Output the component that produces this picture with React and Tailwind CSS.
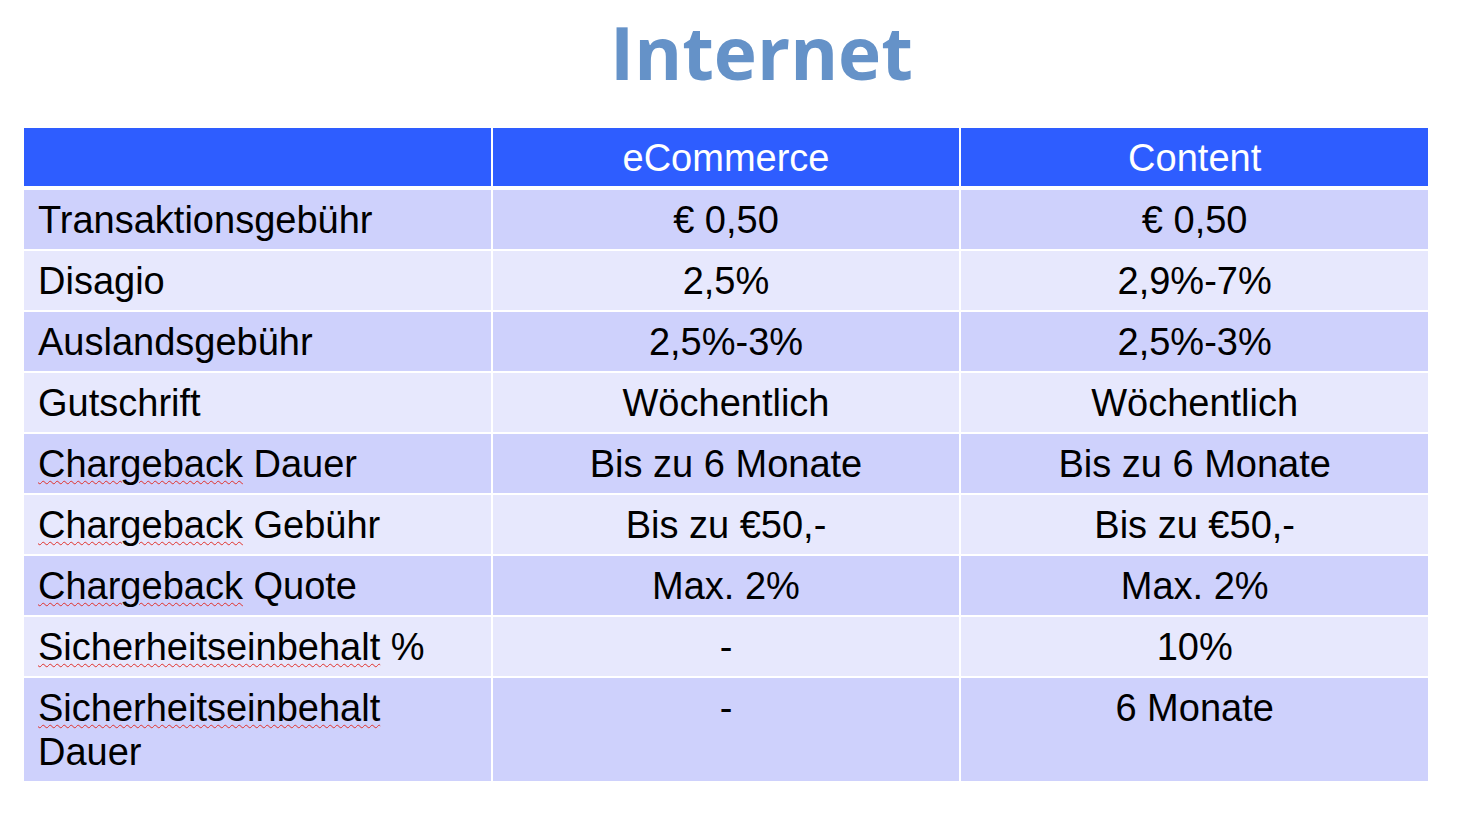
import React from "react";

const rows = [
  { label: "Transaktionsgebühr", a: "€ 0,50", b: "€ 0,50" },
  { label: "Disagio", a: "2,5%", b: "2,9%-7%" },
  { label: "Auslandsgebühr", a: "2,5%-3%", b: "2,5%-3%" },
  { label: "Gutschrift", a: "Wöchentlich", b: "Wöchentlich" },
  { label: [["Chargeback", true], [" Dauer", false]], a: "Bis zu 6 Monate", b: "Bis zu 6 Monate" },
  { label: [["Chargeback", true], [" Gebühr", false]], a: "Bis zu €50,-", b: "Bis zu €50,-" },
  { label: [["Chargeback", true], [" Quote", false]], a: "Max. 2%", b: "Max. 2%" },
  { label: [["Sicherheitseinbehalt", true], [" %", false]], a: "-", b: "10%" },
  { label: [["Sicherheitseinbehalt", true], ["\nDauer", false]], a: "-", b: "6 Monate", tall: true },
];

function Label({ label }) {
  if (typeof label === "string") return <span>{label}</span>;
  return (
    <>
      {label.map(([t, wavy], i) =>
        wavy ? (
          <span
            key={i}
            className="underline decoration-wavy decoration-[#e0302a] decoration-[1px] underline-offset-[3px]"
          >
            {t}
          </span>
        ) : t.startsWith("\n") ? (
          <React.Fragment key={i}>
            <br />
            {t.slice(1)}
          </React.Fragment>
        ) : (
          <span key={i}>{t}</span>
        )
      )}
    </>
  );
}

export default function App() {
  return (
    <div className="w-[1463px] h-[816px] bg-white overflow-hidden">
      <div className="flex justify-center pl-[60px] pt-[2px]">
        <h1
          className="text-[73px] leading-[100px] font-bold text-[#6592c8]"
          style={{ fontFamily: '"Open Sans", sans-serif' }}
        >
          Internet
        </h1>
      </div>
      <div
        className="ml-[24px] mt-[26px] w-[1404px] flex flex-col gap-[2px] text-[38px] leading-[44px] text-black"
        style={{ fontFamily: '"Liberation Sans", Arial, sans-serif' }}
      >
        <div className="grid grid-cols-3 gap-x-[2px] mb-[2px]">
          <div className="bg-[#2e5dff] h-[58px]"></div>
          <div className="bg-[#2e5dff] h-[58px] pt-[8px] text-center text-white">eCommerce</div>
          <div className="bg-[#2e5dff] h-[58px] pt-[8px] text-center text-white">Content</div>
        </div>
        {rows.map((r, i) => {
          const bg = i % 2 === 0 ? "bg-[#ced1fc]" : "bg-[#e7e8fd]";
          return (
            <div key={i} className="grid grid-cols-3 gap-x-[2px]">
              <div className={`${bg} pl-[14px] pt-[8px] pb-[7px]`}>
                <Label label={r.label} />
              </div>
              <div className={`${bg} pt-[8px] pb-[7px] text-center`}>{r.a}</div>
              <div className={`${bg} pt-[8px] pb-[7px] text-center`}>{r.b}</div>
            </div>
          );
        })}
      </div>
    </div>
  );
}
